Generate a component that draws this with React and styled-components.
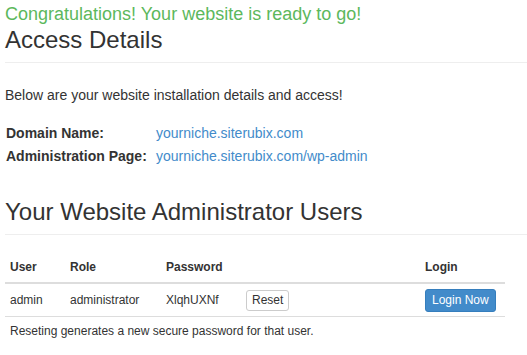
import React from 'react'
import styled, { createGlobalStyle } from 'styled-components'

const GlobalStyle = createGlobalStyle`
    html, body {
        margin: 0;
        padding: 0;
        background: #fff;
    }
    body {
        font-family: "Liberation Sans", Arial, sans-serif;
        font-size: 14px;
        color: #333;
    }
`;

const users = [
    { user: 'admin', role: 'administrator', password: 'XlqhUXNf' },
];

export default function App() {
  return (
    <Page>
        <GlobalStyle />
        <Success>Congratulations! Your website is ready to go!</Success>
        <Heading $top={3}>Access Details</Heading>
        <Rule />
        <Intro>Below are your website installation details and access!</Intro>
        <Details>
            <dt>Domain Name:</dt>
            <dd><a href="#">yourniche.siterubix.com</a></dd>
            <dt>Administration Page:</dt>
            <dd><a href="#">yourniche.siterubix.com/wp-admin</a></dd>
        </Details>
        <Heading $top={31}>Your Website Administrator Users</Heading>
        <Rule />
        <Table>
            <colgroup>
                <col style={{ width: 60 }} />
                <col style={{ width: 96 }} />
                <col style={{ width: 80 }} />
                <col style={{ width: 179 }} />
                <col style={{ width: 85 }} />
            </colgroup>
            <thead>
                <tr>
                    <th>User</th>
                    <th>Role</th>
                    <th>Password</th>
                    <th></th>
                    <th>Login</th>
                </tr>
            </thead>
            <tbody>
                {users.map(u => (
                    <tr key={u.user}>
                        <td>{u.user}</td>
                        <td>{u.role}</td>
                        <td>{u.password}</td>
                        <td><Button>Reset</Button></td>
                        <td><Button $primary>Login Now</Button></td>
                    </tr>
                ))}
            </tbody>
        </Table>
        <Note>Reseting generates a new secure password for that user.</Note>
    </Page>
  )
}

const Page = styled.div`
    padding: 4px 0 0 5px;
`;

const Success = styled.h3`
    margin: 0;
    font-size: 18px;
    line-height: 20px;
    font-weight: normal;
    color: #5cb85c;
`;

const Heading = styled.h2`
    margin: ${p => p.$top}px 0 0;
    font-size: 24px;
    line-height: 26px;
    font-weight: normal;
    color: #333;
`;

const Rule = styled.hr`
    margin: 9px 0 0;
    border: 0;
    border-top: 1px solid #eee;
    height: 0;
`;

const Intro = styled.p`
    margin: 22px 0 0;
    line-height: 20px;
`;

const Details = styled.dl`
    display: grid;
    grid-template-columns: 150px auto;
    margin: 17px 0 0;
    padding-left: 1px;
    line-height: 23px;
    dt {
        font-weight: bold;
    }
    dd {
        margin: 0;
    }
    a {
        color: #428bca;
        text-decoration: none;
    }
`;

const Table = styled.table`
    margin-top: 15px;
    width: 500px;
    table-layout: fixed;
    border-collapse: collapse;
    font-size: 12px;
    line-height: 17px;
    th {
        text-align: left;
        font-weight: bold;
        padding: 9px 5px 6px;
        border-bottom: 2px solid #ddd;
    }
    td {
        padding: 5px 5px 4px;
        vertical-align: middle;
        border-bottom: 1px solid #ddd;
    }
`;

const Button = styled.button`
    display: inline-block;
    font-family: inherit;
    font-size: 12px;
    line-height: 17px;
    padding: ${p => (p.$primary ? '2px 6px' : '1px 5px')};
    border-radius: 3px;
    border: 1px solid ${p => (p.$primary ? '#357ebd' : '#ccc')};
    background: ${p => (p.$primary ? '#428bca' : '#fff')};
    color: ${p => (p.$primary ? '#fff' : '#333')};
    cursor: pointer;
`;

const Note = styled.p`
    margin: 6px 0 0;
    padding-left: 5px;
    font-size: 12px;
    line-height: 17px;
`;
